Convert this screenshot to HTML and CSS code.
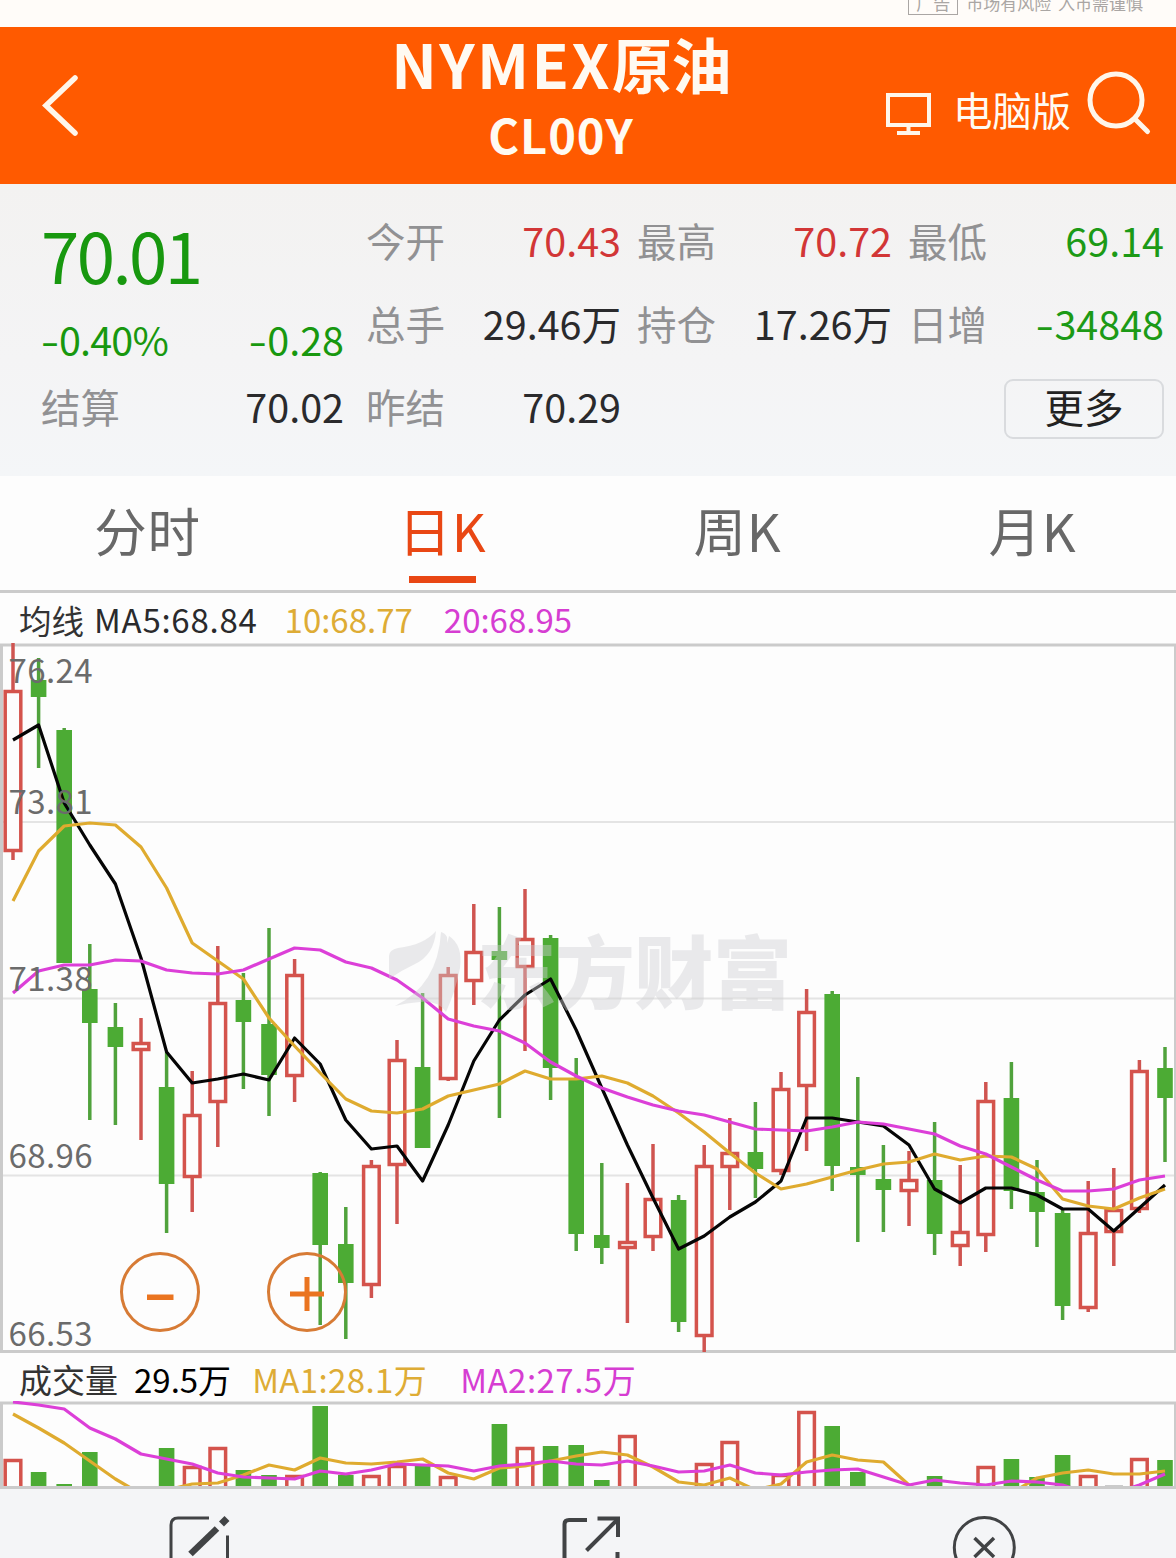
FILE: index.html
```html
<!DOCTYPE html>
<html lang="zh-CN">
<head>
<meta charset="utf-8">
<title>NYMEX原油 CL00Y</title>
<link rel="stylesheet" href="styles.css">
</head>
<body>
<div class="notice"><span class="ad">广告</span><span class="risk">市场有风险 入市需谨慎</span></div>

<header class="header">
  <svg class="back" width="44" height="70" viewBox="0 0 44 70"><path d="M35 8 6 35.500 35 63"/></svg>
  <div class="title">
    <h1><span>NYMEX</span>原油</h1>
    <h2>CL00Y</h2>
  </div>
  <div class="tools">
    <svg class="pc" width="46" height="44" viewBox="0 0 46 44"><path d="M2 2H43V32H2Z"/><path d="M22.500 32V39M11 40H34"/></svg>
    <span>电脑版</span>
    <svg class="search" width="66" height="66" viewBox="0 0 66 66"><circle cx="30" cy="30" r="26"/><path d="M49 49 61.500 61.500"/></svg>
  </div>
</header>

<section class="stats">
  <div class="last">
    <div class="price">70.01</div>
    <div class="change"><span class="pct"><i>-</i>0.40%</span><span><i>-</i>0.28</span></div>
  </div>
  <div class="item"><span>今开</span><b class="up">70.43</b></div>
  <div class="item"><span>最高</span><b class="up">70.72</b></div>
  <div class="item end"><span>最低</span><b class="down">69.14</b></div>
  <div class="item"><span>总手</span><b>29.46万</b></div>
  <div class="item"><span>持仓</span><b>17.26万</b></div>
  <div class="item end"><span>日增</span><b class="down"><i>-</i>34848</b></div>
  <div class="item start"><span>结算</span><b>70.02</b></div>
  <div class="item"><span>昨结</span><b>70.29</b></div>
  <button class="more">更多</button>
</section>

<nav class="tabs">
  <a>分时</a><a class="active">日K</a><a>周K</a><a>月K</a>
</nav>

<div class="legend avg"><span class="name">均线</span><span class="l5">MA5:68.84</span><span class="gold l10">10:68.77</span><span class="pink l20">20:68.95</span></div>
<svg class="chart" id="price" width="1176" height="710" viewBox="0 643 1176 710"></svg>
<div class="legend vol"><span class="name">成交量</span><span class="total">29.5万</span><span class="gold m1">MA1:28.1万</span><span class="pink m2">MA2:27.5万</span></div>
<svg class="chart" id="volume" width="1176" height="88" viewBox="0 1401 1176 88"></svg>

<footer class="footer">
  <svg width="66" height="46" viewBox="166 1512 66 46"><path d="M171 1560V1525Q171 1518 178 1518H209M227.500 1535.500V1560" stroke-width="3"/><path d="M190.500 1554 217 1528.500" stroke-width="6.500"/><path d="M221.500 1524 227 1518.500" stroke-width="7"/></svg>
  <svg width="66" height="46" viewBox="559 1512 66 46"><path d="M564.500 1560V1524Q564.500 1520 569 1520H587M597.500 1518.500H618V1537M617.500 1552V1560" stroke-width="4"/><path d="M586.500 1550.500 617 1520" stroke-width="4"/></svg>
  <svg width="66" height="46" viewBox="951 1512 66 46"><circle cx="984.300" cy="1547.500" r="30" stroke-width="3"/><path d="M974.500 1538 994 1557M994 1538 974.500 1557" stroke-width="3.500"/></svg>
</footer>
<script src="chart.js"></script>
</body>
</html>
```
FILE: styles.css
```css
* { box-sizing: border-box; }
body {
  margin: 0;
  width: 1176px;
  height: 1558px;
  overflow: hidden;
  background: #fdfdfd;
  color: #2a2a2c;
  font-family: "Noto Sans CJK SC", "Noto Sans", sans-serif;
}
.notice {
  height: 27px;
  padding-right: 33px;
  display: flex;
  justify-content: flex-end;
  align-items: flex-start;
  overflow: hidden;
  background: #fffcf9;
  color: #aaa6a4;
  font-size: 17px;
  line-height: 24px;
}
.ad {
  width: 50px;
  height: 24px;
  margin: -9px 8px 0 0;
  border: 1.5px solid #aaa6a4;
  text-align: center;
  line-height: 21px;
  font-size: 17px;
}
.risk { margin-top: -9px; white-space: pre; word-spacing: 3px; }

.header {
  height: 157px;
  background: #ff5a00;
  color: #fffaf2;
  display: grid;
  grid-template-columns: 320px 482px 1fr;
}
.header svg { fill: none; stroke: #fff6ea; stroke-linecap: round; }
.back { margin: 43px 0 0 40px; stroke-width: 5.500; }
.title { text-align: center; }
.title h1, .title h2 { margin: 0; font-weight: 700; }
.title h1 { font-size: 60px; line-height: 72px; height: 72px; letter-spacing: -0.6px; }
.title h1 span { font-size: 61px; letter-spacing: 2.4px; }
.title h2 { font-size: 47px; line-height: 70px; letter-spacing: 1px; }
.tools { display: flex; align-items: flex-start; padding: 44px 0 0 84px; }
.tools span { font-size: 39.5px; line-height: 56px; margin: 10px 0 0 21px; width: 119px; letter-spacing: -0.3px; }
.header .pc { margin-top: 22px; stroke-width: 4; stroke-linecap: butt; }
.search { margin-left: 14px; stroke-width: 5; margin-top: -1px; }

.stats {
  height: 292px;
  padding: 14px 12px 0 41px;
  background: linear-gradient(#f3f2f1, #f4f4f5 60%, #f4f6f8);
  display: grid;
  grid-template-columns: 325px 271px 271px 256px;
  grid-template-rows: 83px 83px 83px;
}
.stats i { display: inline-block; font-style: normal; transform: scaleX(1.35); margin: 0 3px 0 2px; }
.last { grid-row: span 2; color: #18980f; padding-right: 22px; }
.price { font-size: 69px; line-height: 102px; padding-top: 5px; letter-spacing: -2.6px; }
.change { display: flex; justify-content: space-between; font-size: 39.5px; line-height: 64px; padding-top: 2px; }
.pct { letter-spacing: -0.8px; }
.item { display: flex; justify-content: space-between; align-items: center; font-size: 39.5px; line-height: 60px; padding-right: 16px; }
.item.start { padding-right: 22px; }
.item.end { padding-right: 0; }
.item span { color: #919193; }
.item b { font-weight: 400; }
.item .up { color: #d23636; }
.item .down { color: #1c9a16; }
.more {
  grid-column: 4;
  justify-self: end;
  align-self: center;
  width: 160px;
  height: 60px;
  margin-top: 7px;
  padding: 0 0 6px;
  border: 2px solid #d9dbde;
  border-radius: 9px;
  background: none;
  color: #222;
  font: 39.5px/50px "Noto Sans CJK SC", sans-serif;
}

.tabs {
  height: 117px;
  border-bottom: 3px solid #cbcbcb;
  display: grid;
  grid-template-columns: repeat(4, 295px);
  color: #686868;
  font-size: 52.5px;
  letter-spacing: 0.8px;
}
.tabs a {
  display: flex;
  flex-direction: column;
  align-items: center;
  line-height: 100px;
  height: 107px;
  padding-top: 3px;
}
.tabs .active { color: #e94714; }
.tabs .active::after { content: ""; width: 67px; height: 7px; margin-top: -3px; background: #e94714; flex: none; }

.legend { display: flex; align-items: center; font-size: 33px; padding-left: 19px; white-space: nowrap; }
.avg { height: 50px; padding-top: 2px; }
.vol { height: 48px; padding-top: 4px; }
.name { color: #333; }
.avg .name { font-size: 32.5px; }
.gold { color: #deac35; }
.pink { color: #d63dd2; }
.l5 { margin-left: 10px; letter-spacing: 0.75px; }
.l10 { margin-left: 27px; }
.l20 { margin-left: 31px; }
.total { margin-left: 16px; color: #000; }
.m1 { margin-left: 21px; letter-spacing: 0.4px; }
.m2 { margin-left: 33px; letter-spacing: 0.5px; }

.chart { display: block; overflow: hidden; }
.chart text { font-size: 33px; fill: #6b6b6b; }
.frame { fill: #cbcbcb; }
.grid { stroke: #e4e4e4; stroke-width: 2; }
.g-fill { fill: #4cab34; }
.g-wick { stroke: #50a23c; stroke-width: 3.5; }
.r-wick { stroke: #cf5450; stroke-width: 3.5; }
.r-body { fill: #fdfdfd; stroke: #d4534c; stroke-width: 3.5; }
.line { fill: none; stroke-width: 3.2; stroke-linejoin: round; }
.ma5 { stroke: #050505; }
.ma10 { stroke: #dfab2f; }
.ma20 { stroke: #dc3fd8; }
.mark { opacity: .42; }
.mark path { fill: #cfcfd3; }
.chart .mark text { fill: #cfcfd3; font-size: 79px; font-weight: 900; }
.zoom circle { fill: none; stroke: #d77b35; stroke-width: 3; }
.zoom path { fill: #ea7420; }

.footer {
  height: 69px;
  padding: 23px 159px 0 166px;
  background: #f4f5f7;
  display: flex;
  justify-content: space-between;
}
.footer svg { fill: none; stroke: #414345; }
```
FILE: chart.js
```js
// Each candle: direction, body top, body bottom, high, low (chart units)
const candles = [
['r',690,852,643,860],['g',680,697,658,768],['g',730,963,728,963],['g',989,1023,944,1120],['g',1027,1047,1003,1125],
['r',1042,1051,1018,1140],['g',1087,1184,1052,1233],['r',1114,1178,1071,1212],['r',1002,1103,946,1147],['g',1000,1022,973,1089],
['g',1024,1075,928,1116],['r',974,1077,959,1102],['g',1173,1245,1172,1325],['g',1244,1283,1207,1339],['r',1165,1286,1160,1298],
['r',1059,1166,1040,1224],['g',1067,1148,993,1148],['r',974,1080,967,1081],['r',951,982,904,1005],['g',951,960,907,1118],
['r',938,968,889,1051],['g',938,1068,935,1100],['g',1080,1234,1058,1251],['g',1235,1248,1163,1264],['r',1241,1249,1183,1323],
['r',1198,1238,1144,1251],['g',1200,1322,1195,1332],['r',1165,1337,1145,1352],['r',1152,1168,1118,1210],['g',1152,1169,1102,1198],
['r',1088,1172,1072,1175],['r',1011,1087,989,1151],['g',994,1166,991,1191],['g',1167,1175,1077,1242],['g',1179,1190,1145,1232],
['r',1179,1192,1151,1226],['g',1180,1234,1122,1255],['r',1231,1247,1165,1266],['r',1100,1236,1082,1252],['g',1098,1191,1062,1209],
['g',1192,1212,1160,1247],['g',1213,1306,1210,1320],['r',1232,1309,1181,1312],['r',1209,1233,1168,1266],['r',1070,1210,1060,1213],
['g',1068,1098,1047,1162]];
const ma5 = [740,725,803,845,884,958,1052,1083,1079,1074,1080,1038,1064,1120,1149,1146,1181,1125,1061,1020,995,979,1030,1088,1145,1198,1249,1236,1217,1202,1181,1118,1118,1122,1126,1145,1189,1203,1188,1188,1195,1209,1209,1231,1208,1185];
const ma10 = [901,851,826,823,825,847,888,943,961,979,1018,1046,1073,1099,1111,1113,1109,1096,1090,1084,1071,1079,1079,1076,1083,1096,1113,1132,1153,1173,1189,1184,1177,1170,1164,1162,1154,1160,1156,1157,1169,1199,1206,1209,1198,1189];
const ma20 = [993,971,965,965,960,961,970,973,974,970,959,948,950,962,968,980,998,1019,1026,1031,1043,1062,1076,1088,1097,1105,1111,1115,1122,1129,1130,1131,1127,1122,1124,1129,1134,1146,1154,1167,1180,1191,1191,1189,1180,1176];
// Volume bar tops; null where the bar falls below the visible area
const vol = [1459,1472,1484,1452,null,null,1448,1466,1447,1470,1475,1475,1406,1475,1475,1465,1464,1476,null,1424,1447,1446,1445,1480,1435,null,null,1463,1441,null,1474,1411,1426,1472,null,null,1476,null,1466,1459,1477,1455,1475,null,1458,1460];
const vma1 = [1414,1428,1443,1461,1479,1494,1490,1484,1483,1475,1465,1470,1458,1463,1464,1462,1459,1473,1479,1468,1466,1461,1456,1452,1455,1467,1482,1485,1478,1490,1484,1462,1455,1460,1462,1485,1500,1505,1505,1493,1478,1473,1470,1474,1474,1471];
const vma2 = [1402,1405,1409,1428,1439,1454,1459,1464,1473,1477,1478,1479,1471,1474,1470,1464,1465,1466,1471,1466,1464,1461,1464,1465,1461,1466,1472,1471,1465,1473,1475,1472,1470,1469,1477,1485,1480,1483,1485,1481,1482,1485,1493,1493,1485,1474];

const px = i => 13 + 25.6 * i;
const line = (ys, cls) => `<polyline class="line ${cls}" points="${ys.map((y, i) => px(i).toFixed(1) + ',' + y).join(' ')}"/>`;
const bar = (d, x, top, bottom) => d === 'g'
  ? `<rect class="g-fill" x="${x - 7.8}" y="${top}" width="15.600" height="${bottom - top}"/>`
  : `<rect class="r-body" x="${x - 7.8}" y="${top + 1.5}" width="15.600" height="${Math.max(bottom - top - 3, 2)}"/>`;

let p = '<path class="frame" d="M0 643.500H1176V646.500H0ZM0 643.500H3V1353H0ZM1174 643.500H1176V1353H1174ZM0 1350H1176V1353H0Z"/>';
p += '<path class="grid" d="M3 822H1174M3 998.500H1174M3 1175.500H1174"/>';
candles.forEach(([d, t, b, h, l], i) => {
  p += `<path class="${d}-wick" d="M${px(i)} ${h}V${l}"/>` + bar(d, px(i), t, b);
});
p += line(ma5, 'ma5') + line(ma10, 'ma10') + line(ma20, 'ma20');
p += `<g class="mark"><path d="M389 956Q389 950 398 948Q424 945 436 931Q434 955 415 964Q402 970 389 979Z"/>
<path d="M395 1006Q438 985 441 932Q445 933 447 937Q451 972 420 998Q438 985 449 936Q463 945 460 968Q456 990 446 1012Q438 1000 420 1002Q406 1003 395 1006Z"/>
<text x="477" y="1003" textLength="315">东方财富</text></g>`;
[['76.24', 683], ['73.81', 814], ['71.38', 991], ['68.96', 1168], ['66.53', 1346]].forEach(([t, y]) => {
  p += `<text x="8.500" y="${y}" textLength="84">${t}</text>`;
});
p += `<g class="zoom"><circle cx="160" cy="1292" r="38.500"/><path d="M147 1294.500H173.500V1300H147Z"/>
<circle cx="307" cy="1292" r="38.500"/><path d="M290 1291.500H304.500V1277H309.500V1291.500H324V1296.500H309.500V1311H304.500V1296.500H290Z"/></g>`;
document.getElementById('price').innerHTML = p;

let v = '<path class="frame" d="M0 1401.500H1176V1404.500H0ZM0 1401.500H3V1489H0ZM1174 1401.500H1176V1489H1174Z"/>';
vol.forEach((t, i) => { if (t !== null) v += bar(candles[i][0], px(i), t, 1495); });
v += line(vma1, 'ma10') + line(vma2, 'ma20');
v += '<path class="frame" d="M1105 1485H1123V1487H1105ZM0 1486H1176V1489H0Z"/>';
document.getElementById('volume').innerHTML = v;
```
